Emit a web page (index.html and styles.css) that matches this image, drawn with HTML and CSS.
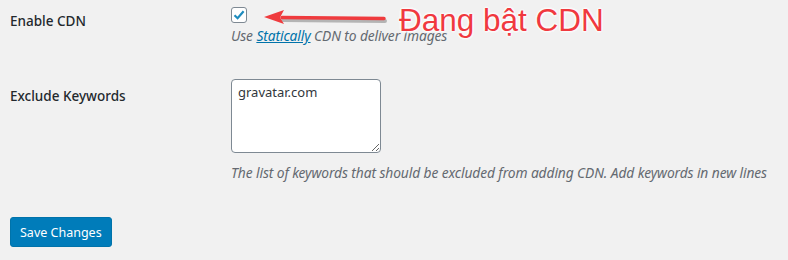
FILE: index.html
```html
<!DOCTYPE html>
<html lang="vi">
<head>
     <meta charset="UTF-8">
     <title>CDN Settings</title>
     <link rel="stylesheet" href="styles.css">
</head>
<body>
     <div class="settings">
          <div class="form_row row_cdn">
               <div class="form_label">Enable CDN</div>
               <div class="form_field">
                    <span class="checkbox">
                         <svg width="12" height="12" viewBox="0 0 12 12"><path d="M1.5 6.2 L4.6 9.2 L10.6 2.2" fill="none" stroke="#1e8cbe" stroke-width="2.2"/></svg>
                    </span>
                    <p class="desc">Use <a href="#">Statically</a> CDN to deliver images</p>
               </div>
               <!-- annotation over the screenshot -->
               <div class="note_arrow">
                    <svg width="130" height="20" viewBox="0 0 130 20">
                         <path d="M20 10 L122 11" stroke="rgba(0,0,0,0.25)" stroke-width="4" stroke-linecap="round" transform="translate(1,2)"/>
                         <path d="M20 9.5 L122 10.5" stroke="#ef3b3e" stroke-width="3.5" stroke-linecap="round"/>
                         <path d="M2 9 L22 2 L18 9.5 L22 16 Z" fill="#ef3b3e"/>
                    </svg>
               </div>
               <div class="note_text">Đang bật CDN</div>
          </div>
          <div class="form_row row_keywords">
               <div class="form_label">Exclude Keywords</div>
               <div class="form_field">
                    <textarea class="keywords">gravatar.com</textarea>
                    <p class="desc">The list of keywords that should be excluded from adding CDN. Add keywords in new lines</p>
               </div>
          </div>
          <button class="save_btn">Save Changes</button>
     </div>
</body>
</html>
```

FILE: styles.css
```css
body {
     margin: 0;
     background-color: #f1f1f1;
     font-family: "Noto Sans", "Open Sans", sans-serif;
     font-size: 14px;
     color: #23282d;
}

.settings {
     padding: 0 10px;
}

.form_row {
     display: grid;
     grid-template-columns: 221px 1fr;
     position: relative;
}

.form_label {
     font-size: 13.5px;
     font-weight: 500;
}

.row_cdn {
     padding-top: 7px;
}

.row_cdn .form_label {
     padding-top: 5px;
}

.checkbox {
     display: flex;
     align-items: center;
     justify-content: center;
     width: 14px;
     height: 14px;
     border: 1px solid #7e8993;
     border-radius: 3px;
     background-color: #fff;
}

.desc {
     margin: 3px 0 0;
     font-size: 13.8px;
     letter-spacing: -0.1px;
     font-style: italic;
     color: #646970;
}

.desc a {
     color: #0073aa;
}

.row_keywords {
     margin-top: 34px;
}

.row_keywords .form_label {
     padding-top: 8px;
}

.keywords {
     display: block;
     width: 150px;
     height: 74px;
     box-sizing: border-box;
     margin: 0;
     padding: 3px 6px;
     border: 1px solid #7e8993;
     border-radius: 4px;
     font-family: inherit;
     font-size: 13px;
     color: #32373c;
     background-color: #fff;
     resize: vertical;
}

.row_keywords .desc {
     margin-top: 10px;
}

.save_btn {
     display: block;
     margin-top: 35px;
     height: 30px;
     padding: 0 9px;
     border: 1px solid #0073aa;
     border-radius: 3px;
     background-color: #007cba;
     color: #fff;
     font-family: inherit;
     font-size: 12.5px;
}

.note_arrow {
     position: absolute;
     left: 252px;
     top: 8px;
}

.note_text {
     position: absolute;
     left: 389px;
     top: 2px;
     font-family: "Liberation Sans", sans-serif;
     font-size: 31.5px;
     line-height: 36px;
     color: #f0393f;
     text-shadow: 0 0 3px #fff, 0 0 3px #fff, 0 0 3px #fff, 0 0 3px #fff;
}
```
